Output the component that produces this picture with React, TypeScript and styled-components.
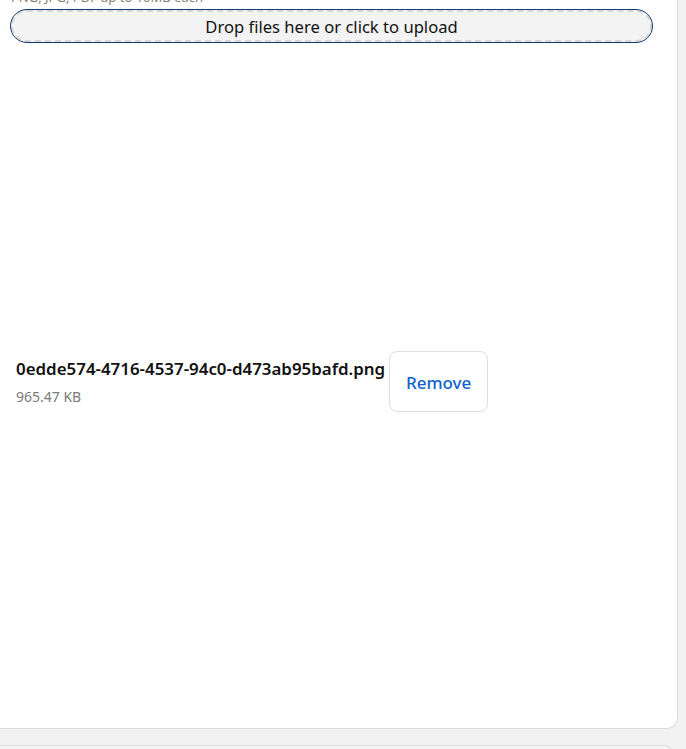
import React from "react";
import styled, { createGlobalStyle } from "styled-components";

const Global = createGlobalStyle`
  html, body { margin: 0; padding: 0; }
  body {
    background: #f2f2f2;
    font-family: "Noto Sans", "Open Sans", sans-serif;
    overflow: hidden;
  }
`;

const Page = styled.div`
  width: 686px;
  height: 749px;
  overflow: hidden;
  display: flex;
  flex-direction: column;
  background: #f2f2f2;
`;

const Panel = styled.section`
  box-sizing: border-box;
  width: 678px;
  height: 729px;
  flex: none;
  background: #ffffff;
  border-right: 1px solid #dcdcdc;
  border-bottom: 1px solid #dcdcdc;
  border-bottom-right-radius: 12px;
  padding: 0 24px 0 11px;
  display: flex;
  flex-direction: column;
`;

const Hint = styled.p`
  margin: -11.5px 0 0 0;
  font-size: 13px;
  line-height: 16px;
  color: #8c8073;
  white-space: nowrap;
`;

const DropZone = styled.button`
  box-sizing: border-box;
  margin-top: 5.5px;
  width: 641px;
  height: 32px;
  border-radius: 999px;
  background: #f3f3f3;
  border: 2px dashed #d6d6d6;
  outline: 1px solid #15396c;
  outline-offset: 0;
  font-family: inherit;
  font-size: 16.6px;
  color: #111;
  display: flex;
  align-items: center;
  justify-content: center;
  padding: 0;
  cursor: pointer;
`;

const FileList = styled.ul`
  list-style: none;
  margin: 309px 0 0 0;
  padding: 0 0 0 5px;
`;

const FileRow = styled.li`
  display: flex;
  align-items: flex-start;
  gap: 4px;
`;

const FileInfo = styled.div`
  display: flex;
  flex-direction: column;
  padding-top: 7px;
`;

const FileName = styled.span`
  font-size: 16.9px;
  font-weight: 600;
  color: #111;
  line-height: 22px;
`;

const FileSize = styled.span`
  font-size: 14px;
  color: #7a7a7a;
  line-height: 20px;
  margin-top: 7px;
`;

const RemoveButton = styled.button`
  box-sizing: border-box;
  width: 99px;
  height: 61px;
  background: #fff;
  border: 1px solid #dedede;
  border-radius: 8px;
  color: #0f62cc;
  font-family: inherit;
  font-size: 17px;
  font-weight: 500;
  cursor: pointer;
  padding: 2px 0 0 0;
`;

const NextPanel = styled.div`
  box-sizing: border-box;
  margin-top: 16px;
  width: 674px;
  height: 20px;
  flex: none;
  background: #f4f4f4;
  border-top: 1px solid #dcdcdc;
  border-right: 1px solid #dcdcdc;
  border-top-right-radius: 10px;
`;

export default function App() {
  return (
    <Page>
      <Global />
      <Panel>
        <Hint>PNG, JPG, PDF up to 10MB each</Hint>
        <DropZone type="button">Drop files here or click to upload</DropZone>
        <FileList>
          <FileRow>
            <FileInfo>
              <FileName>0edde574-4716-4537-94c0-d473ab95bafd.png</FileName>
              <FileSize>965.47 KB</FileSize>
            </FileInfo>
            <RemoveButton type="button">Remove</RemoveButton>
          </FileRow>
        </FileList>
      </Panel>
      <NextPanel />
    </Page>
  );
}
